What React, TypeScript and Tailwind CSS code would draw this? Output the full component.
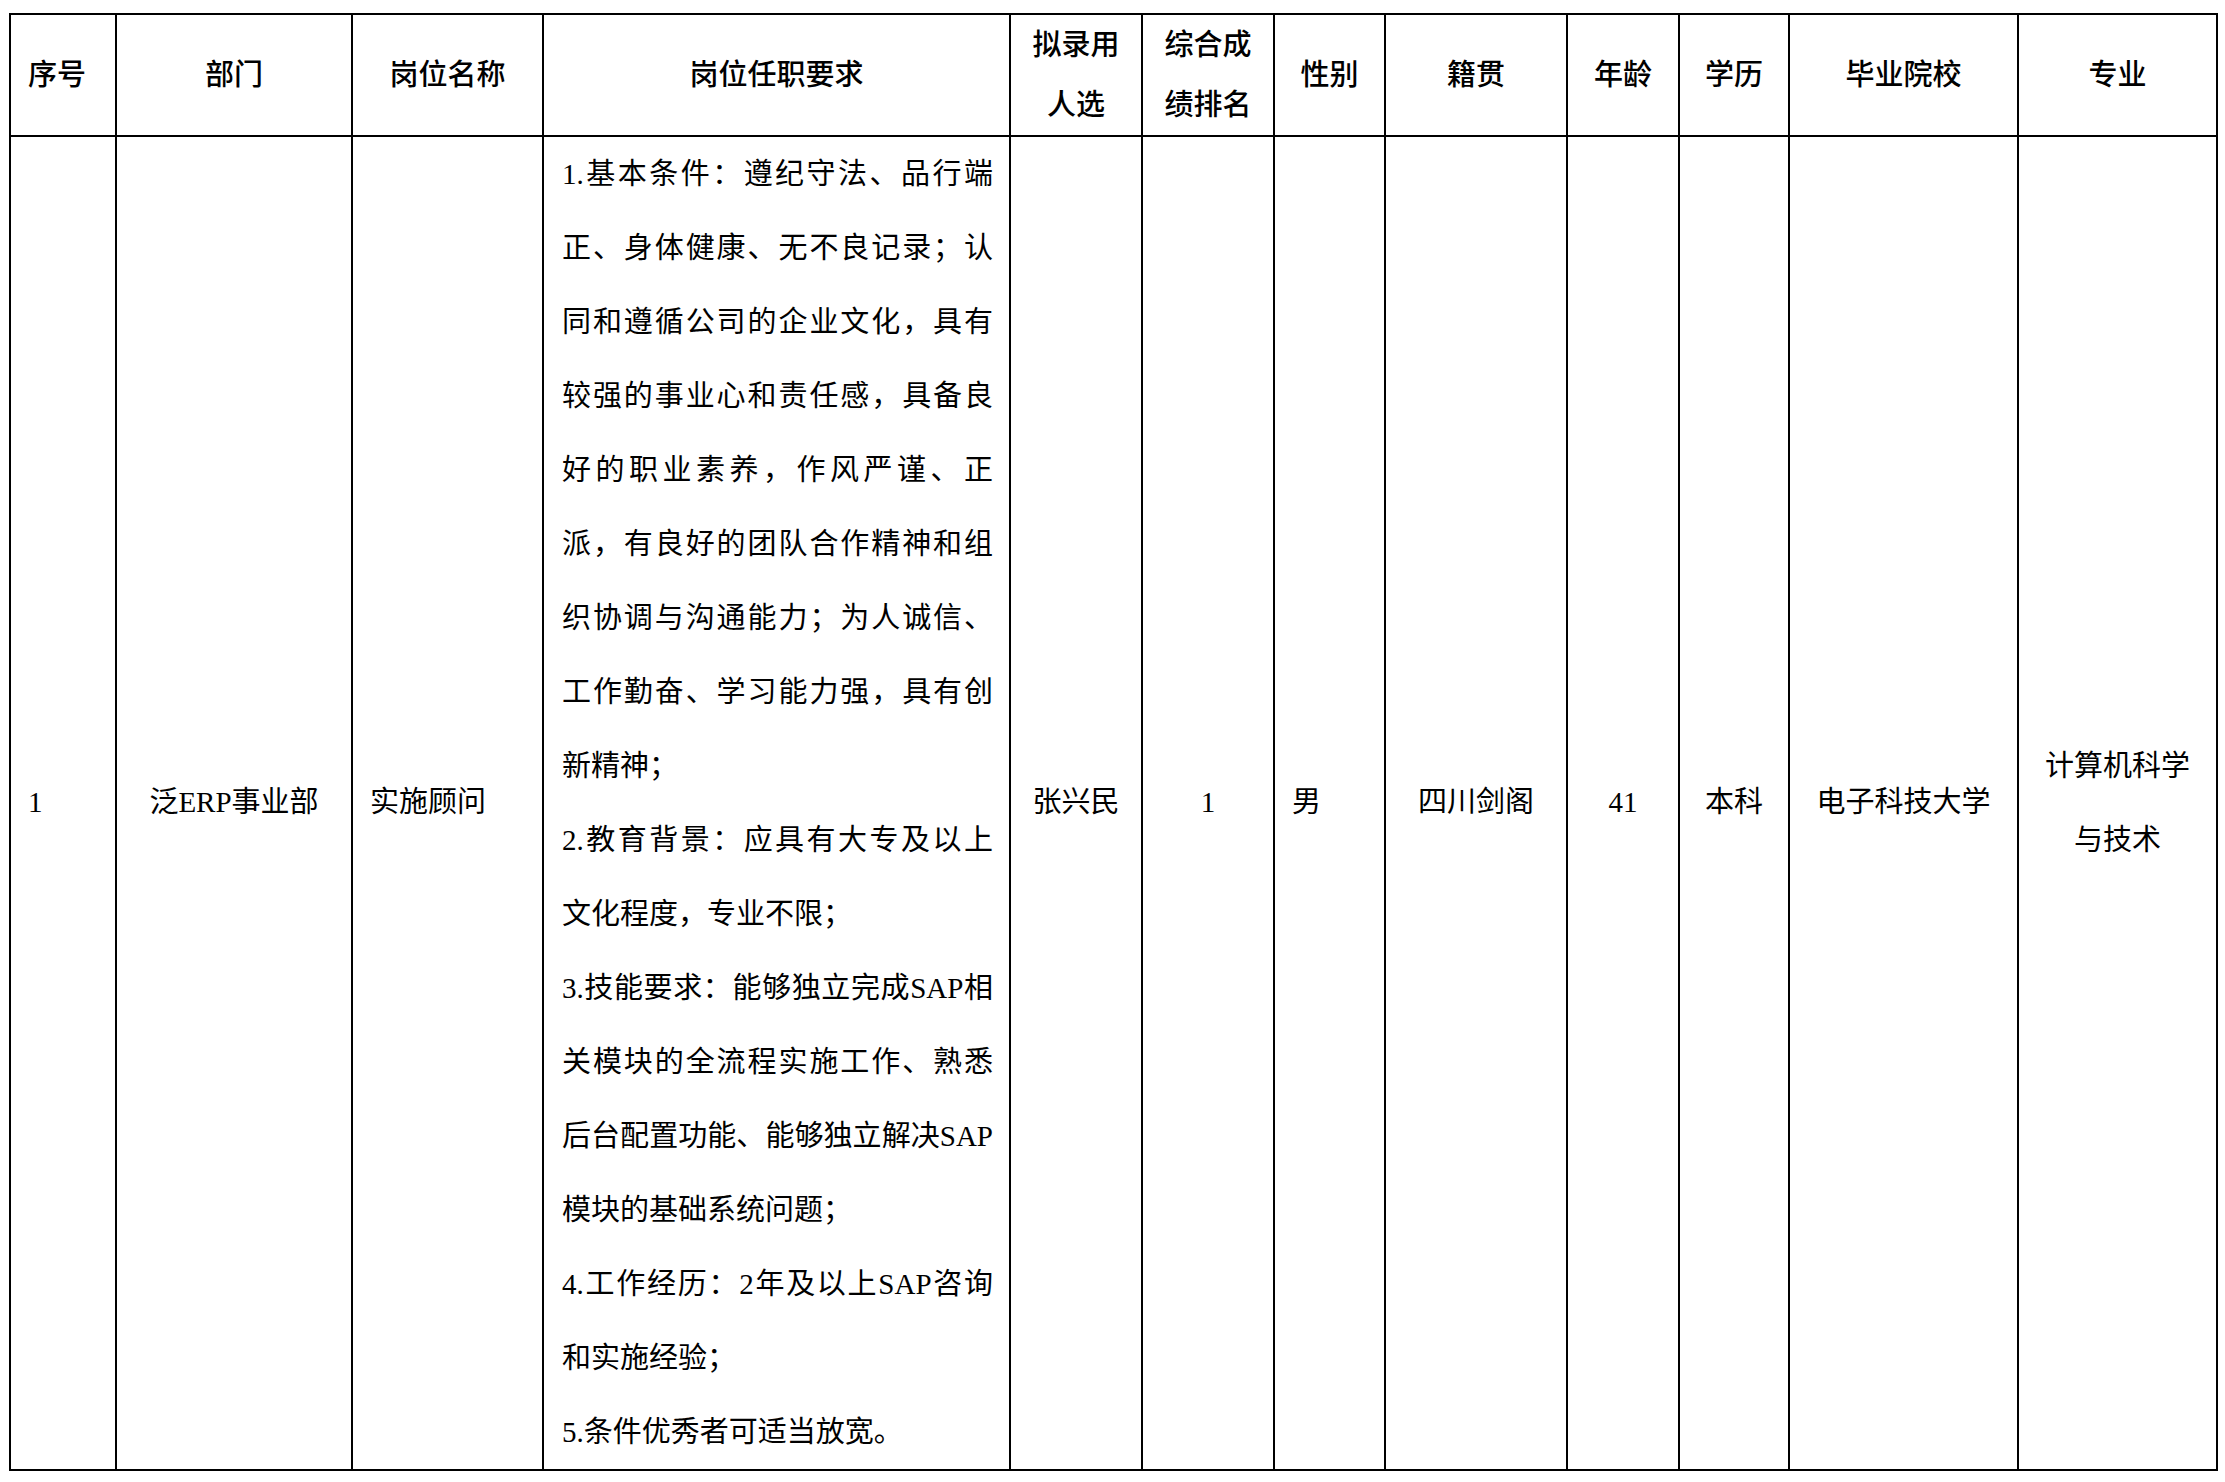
const cols = "grid-cols-[106px_236px_191px_467px_132px_132px_111px_182px_112px_110px_229px_199px]";

const headers: { label: string[]; align?: "left" }[] = [
  { label: ["序号"], align: "left" },
  { label: ["部门"] },
  { label: ["岗位名称"] },
  { label: ["岗位任职要求"] },
  { label: ["拟录用", "人选"] },
  { label: ["综合成", "绩排名"] },
  { label: ["性别"] },
  { label: ["籍贯"] },
  { label: ["年龄"] },
  { label: ["学历"] },
  { label: ["毕业院校"] },
  { label: ["专业"] },
];

// [text, isLastLineOfParagraph]
const duties: [string, boolean][] = [
  ["1.基本条件：遵纪守法、品行端", false],
  ["正、身体健康、无不良记录；认", false],
  ["同和遵循公司的企业文化，具有", false],
  ["较强的事业心和责任感，具备良", false],
  ["好的职业素养，作风严谨、正", false],
  ["派，有良好的团队合作精神和组", false],
  ["织协调与沟通能力；为人诚信、", false],
  ["工作勤奋、学习能力强，具有创", false],
  ["新精神；", true],
  ["2.教育背景：应具有大专及以上", false],
  ["文化程度，专业不限；", true],
  ["3.技能要求：能够独立完成SAP相", false],
  ["关模块的全流程实施工作、熟悉", false],
  ["后台配置功能、能够独立解决SAP", false],
  ["模块的基础系统问题；", true],
  ["4.工作经历：2年及以上SAP咨询", false],
  ["和实施经验；", true],
  ["5.条件优秀者可适当放宽。", true],
];

function Cell({ children, left }: { children: React.ReactNode; left?: boolean }) {
  return (
    <div
      className={
        "flex items-center border-r-2 border-b-2 border-black " +
        (left ? "justify-start pl-[17px]" : "justify-center text-center")
      }
    >
      {children}
    </div>
  );
}

export default function App() {
  return (
    <div className="min-h-screen bg-white pt-[13px] pl-[9px] text-black font-['Liberation_Serif','Noto_Sans_CJK_SC',serif] text-[29px]">
      <div className={"grid w-max border-l-2 border-t-2 border-black " + cols}>
        {headers.map((h, i) => (
          <div
            key={i}
            className={
              "h-[122px] flex flex-col justify-center border-r-2 border-b-2 border-black font-medium leading-[60px] " +
              (h.align === "left" ? "items-start pl-[17px]" : "items-center text-center")
            }
          >
            {h.label.map((l) => (
              <span key={l}>{l}</span>
            ))}
          </div>
        ))}

        <Cell left>1</Cell>
        <Cell>泛ERP事业部</Cell>
        <Cell left>实施顾问</Cell>
        <div className="border-r-2 border-b-2 border-black pl-[18px] pr-[16px] leading-[74px]">
          {duties.map(([t, last], i) => (
            <div key={i} className={last ? "text-left" : "text-justify [text-align-last:justify]"}>
              {t}
            </div>
          ))}
        </div>
        <Cell>张兴民</Cell>
        <Cell>1</Cell>
        <Cell left>男</Cell>
        <Cell>四川剑阁</Cell>
        <Cell>41</Cell>
        <Cell>本科</Cell>
        <Cell>电子科技大学</Cell>
        <Cell>
          <div className="leading-[74px]">
            计算机科学
            <br />
            与技术
          </div>
        </Cell>
      </div>
    </div>
  );
}
